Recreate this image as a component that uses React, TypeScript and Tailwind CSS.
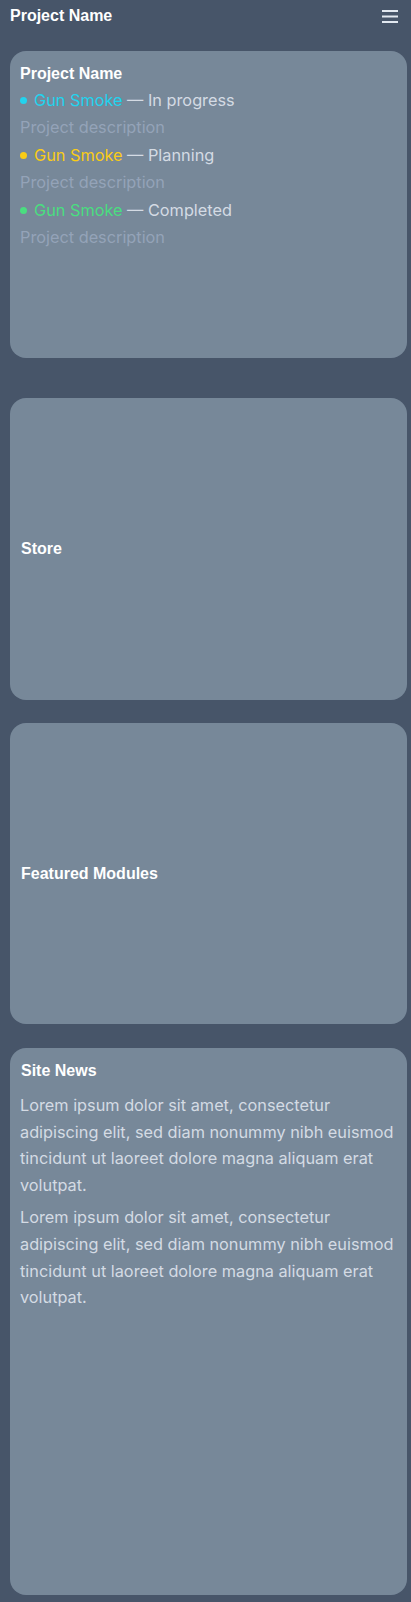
import React from 'react';

const projects = [
  { name: 'Gun Smoke', status: 'In progress', dot: 'bg-[#22d3ee]', text: 'text-[#22d3ee]' },
  { name: 'Gun Smoke', status: 'Planning', dot: 'bg-[#facc15]', text: 'text-[#facc15]' },
  { name: 'Gun Smoke', status: 'Completed', dot: 'bg-[#4ade80]', text: 'text-[#4ade80]' },
];

const lorem =
  'Lorem ipsum dolor sit amet, consectetur adipiscing elit, sed diam nonummy nibh euismod tincidunt ut laoreet dolore magna aliquam erat volutpat.';

const heading = "font-['Liberation_Sans',Arial,sans-serif] font-bold text-[16px] text-white";

const MenuIcon = () => (
  <svg width="16" height="14" viewBox="0 0 16 14" fill="none" stroke="#e2e8f0" strokeWidth="2.2">
    <path d="M0 2h16M0 7.5h16M0 13h16" />
  </svg>
);

export default function App() {
  return (
    <div className="min-h-[1602px] bg-[#475569] font-['Inter',sans-serif] pb-[7px]">
      <header className="h-8 flex items-center justify-between pl-[10px] pr-[13px]">
        <span className={heading}>Project Name</span>
        <MenuIcon />
      </header>

      <main className="flex flex-col pl-[10px] pr-[4px] pt-[19px]">
        <section className="h-[307px] rounded-2xl bg-[#778899] px-[10px] pt-[10px]">
          <h2 className={`${heading} leading-[26px]`}>Project Name</h2>
          {projects.map((p, i) => (
            <div key={i} className="text-[16.3px] leading-[27.4px]">
              <div className="flex items-center">
                <span className={`w-[7px] h-[7px] rounded-full ${p.dot} mr-[7px]`} />
                <span className={p.text}>{p.name}</span>
                <span className="text-[#d4dbe4]">&nbsp;— {p.status}</span>
              </div>
              <p className="text-[#94a3b8]">Project description</p>
            </div>
          ))}
        </section>

        <section className="mt-10 h-[302px] rounded-2xl bg-[#778899] px-[11px] flex items-center">
          <h2 className={heading}>Store</h2>
        </section>

        <section className="mt-[23px] h-[301px] rounded-2xl bg-[#778899] px-[11px] flex items-center">
          <h2 className={heading}>Featured Modules</h2>
        </section>

        <section className="mt-6 h-[547px] rounded-2xl bg-[#778899] px-[10px] pt-[13px]">
          <h2 className={`${heading} leading-[20px] pl-[1px]`}>Site News</h2>
          <p className="mt-[11px] text-[16.3px] leading-[26.6px] text-[#d4dbe4]">{lorem}</p>
          <p className="mt-[6px] text-[16.3px] leading-[26.6px] text-[#d4dbe4]">{lorem}</p>
        </section>
      </main>
    </div>
  );
}
